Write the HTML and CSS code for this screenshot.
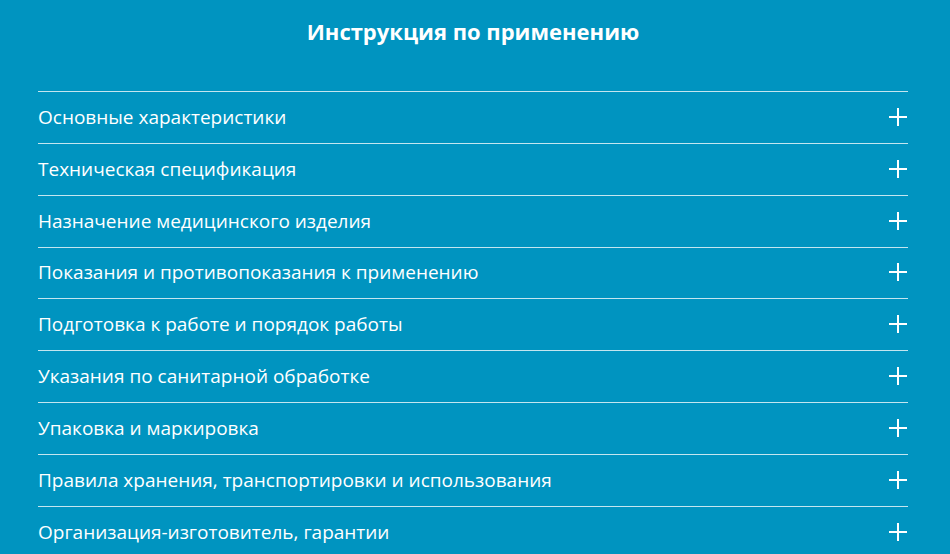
FILE: index.html
```html
<!DOCTYPE html>
<html lang="ru">
<head>
    <meta charset="UTF-8">
    <meta name="viewport" content="width=device-width, initial-scale=1.0">
    <title>Инструкция по применению</title>
    <link rel="stylesheet" href="styles.css">
</head>
<body>
    <section class="manual">
        <h2>Инструкция по применению</h2>
        <ul class="accordion">
            <li class="acc-item"><span>Основные характеристики</span><i class="plus"></i></li>
            <li class="acc-item"><span>Техническая спецификация</span><i class="plus"></i></li>
            <li class="acc-item"><span>Назначение медицинского изделия</span><i class="plus"></i></li>
            <li class="acc-item"><span>Показания и противопоказания к применению</span><i class="plus"></i></li>
            <li class="acc-item"><span>Подготовка к работе и порядок работы</span><i class="plus"></i></li>
            <li class="acc-item"><span>Указания по санитарной обработке</span><i class="plus"></i></li>
            <li class="acc-item"><span>Упаковка и маркировка</span><i class="plus"></i></li>
            <li class="acc-item"><span>Правила хранения, транспортировки и использования</span><i class="plus"></i></li>
            <li class="acc-item"><span>Организация-изготовитель, гарантии</span><i class="plus"></i></li>
        </ul>
    </section>
</body>
</html>
```

FILE: styles.css
```css
body {
    margin: 0;
    background-color: #0094c0;
    color: #ffffff;
    font-family: "Open Sans", Arial, sans-serif;
    overflow: hidden;
}
.manual {
    width: 870px;
    margin: 0 0 0 38px;
    padding-top: 15px;
}
h2 {
    margin: 0 0 44px;
    text-align: center;
    font-size: 22px;
    font-weight: 700;
    line-height: 32px;
}
.accordion {
    list-style: none;
    margin: 0;
    padding: 0;
}
.acc-item {
    display: flex;
    align-items: center;
    justify-content: space-between;
    box-sizing: border-box;
    height: 51.85px;
    padding-bottom: 1px;
    border-top: 1px solid #c4e6f0;
    font-size: 19px;
}
/* plus sign drawn with two bars */
.plus {
    position: relative;
    width: 18px;
    height: 18px;
    margin-right: 1px;
}
.plus::before, .plus::after {
    content: "";
    position: absolute;
    background: #ffffff;
}
.plus::before {
    left: 0;
    right: 0;
    top: 8px;
    height: 2px;
}
.plus::after {
    top: 0;
    bottom: 0;
    left: 8px;
    width: 2px;
}
```
